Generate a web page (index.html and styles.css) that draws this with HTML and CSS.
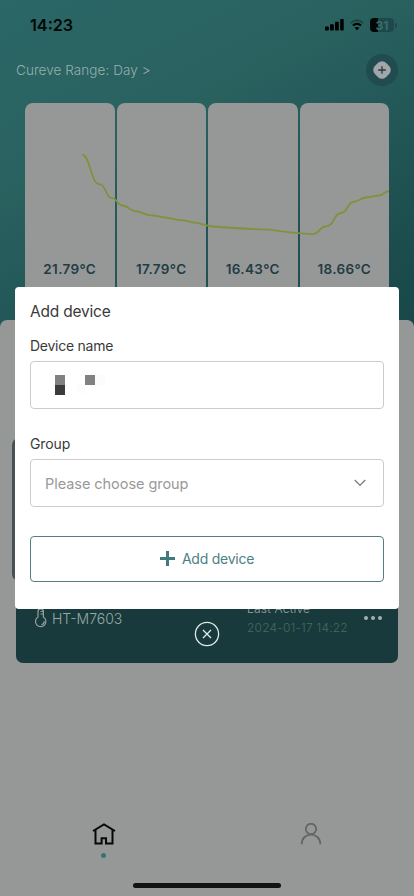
FILE: index.html
```html
<!DOCTYPE html>
<html lang="en">
<head>
<meta charset="utf-8">
<meta name="viewport" content="width=device-width, initial-scale=1">
<title>Add device</title>
<link rel="stylesheet" href="styles.css">
</head>
<body>
<div class="app">
  <header class="hero">
    <div class="status">
      <span class="time">14:23</span>
      <div class="status-icons">
        <svg width="19" height="12" viewBox="0 0 19 12"><rect x="0" y="7.5" width="3.8" height="4" rx=".8"/><rect x="5" y="5.3" width="3.8" height="6.2" rx=".8"/><rect x="10" y="2.8" width="3.8" height="8.7" rx=".8"/><rect x="15.2" y="0" width="3.5" height="11.5" rx=".8"/></svg>
        <svg class="wifi" width="14" height="12" viewBox="0 0 14 12" fill="none"><path d="M.9 4Q7-1.3 13.1 4" stroke="#1d4547" stroke-width="2"/><path d="M2.9 6.5Q7 3.2 11.1 6.5" stroke="#000" stroke-width="2"/><path d="M4.6 8.7Q7 7.1 9.4 8.7L7 11.3Z" fill="#000"/></svg>
        <div class="battery"><span>31</span></div>
        <i class="nub"></i>
      </div>
    </div>
    <div class="toolbar">
      <span class="range">Cureve Range: Day &gt;</span>
      <div class="add-round"><svg width="20" height="20" viewBox="0 0 20 20"><rect x="2.2" y="2.2" width="15.6" height="15.6" rx="5.5" transform="rotate(45 10 10)" fill="#a2a6ab"/><path d="M6.2 10H13.8M10 6.2V13.8" stroke="#263b40" stroke-width="1.3"/></svg></div>
    </div>
    <div class="chart">
      <div class="bar">21.79°C</div>
      <div class="bar">17.79°C</div>
      <div class="bar">16.43°C</div>
      <div class="bar">18.66°C</div>
      <svg class="curve" width="364" height="217" viewBox="25 103 364 217"><path d="M82 154.7C88 154.5 90 171 94 179C96 184.500 98 183.500 101 184.500C105 186 106 195 110 197.500C112 198.300 114 197.600 115.500 200C119 203 118 205.500 124 206C129 206.500 130 210.500 134.500 211C141 211.200 142 214.200 149 215C157 215.200 159 217.200 165 217.500C172 217.800 174 219.800 181 220.200C188 220.500 190 222.300 195 222.600C202 223.800 204 225 209 226C225 228 252 229 270 229.700C280 231.500 293 233.300 312 234.100C320 234.300 319 226.500 326 226.300C335 226 333 213.500 341 213C348 212.500 347 203 353 202C360 201.500 359 198.500 366 197.500C372 197 374 195.800 379 195.500C384 195 384 191.500 389 191"/></svg>
    </div>
  </header>
  <main class="content">
    <div class="side-card"></div>
    <section class="device">
      <div class="device-name">
        <svg width="14" height="20" viewBox="0 0 14 20" fill="none" stroke="#91a2a1" stroke-width="1.2"><path d="M4 9V3.500a2.700 2.700 0 0 1 5.400 0V9a5.200 5.200 0 1 1-5.400 0Z"/><path d="M6.500 3.500H9M6.500 6H9M10.200 13.200A3.400 3.400 0 0 1 7.500 16.700"/></svg>
        <span>HT-M7603</span>
      </div>
      <div class="active"><span class="active-label">Last Active</span><span class="active-date">2024-01-17 14:22</span></div>
      <div class="more"><i></i><i></i><i></i></div>
    </section>
  </main>
  <nav class="tabs">
    <div class="tab"><svg width="24" height="22" viewBox="0 0 24 22" fill="none" stroke="#060707" stroke-width="2"><path d="M1 8L12 1.500L23 8M3.500 7V20.500H9.600V15.300H14V20.500H20.500V7"/></svg><i class="tab-dot"></i></div>
    <div class="tab"><svg width="22" height="22" viewBox="0 0 22 22" fill="none" stroke="#646666" stroke-width="1.800"><circle cx="11" cy="6" r="5.200"/><path d="M1.700 21.300C1.700 8.300 20.300 8.300 20.300 21.300"/></svg></div>
  </nav>
  <div class="home-line"></div>
</div>
<div class="overlay">
  <form class="dialog">
    <h1>Add device</h1>
    <label>Device name</label>
    <div class="field"><svg width="60" height="20" viewBox="0 0 60 20" shape-rendering="crispEdges"><path fill="#818181" d="M10 0h10v10H10zM40 0h10v10H40z"/><path fill="#3b3b3c" d="M10 10h10v10H10z"/><path fill="#fcfcfc" d="M50 0h10v10H50zM32 10h8v8h-8z"/></svg></div>
    <label class="group-label">Group</label>
    <div class="field select"><span>Please choose group</span><svg width="12" height="8" viewBox="0 0 12 8" fill="none" stroke="#777" stroke-width="1.200"><path d="M.8 1L6 6.500L11.200 1"/></svg></div>
    <div class="submit"><svg width="15" height="15" viewBox="0 0 15 15"><path d="M7.500 0V15M0 7.500H15" stroke="#417a7b" stroke-width="3"/></svg><span>Add device</span></div>
  </form>
  <svg class="close" width="26" height="26" viewBox="0 0 26 26" fill="none" stroke="#e2eaea" stroke-width="1.300"><circle cx="13" cy="13" r="11.600"/><path d="M9 9L17 17M17 9L9 17"/></svg>
</div>
</body>
</html>
```
FILE: styles.css
```css
* { box-sizing: border-box; }
body { margin: 0; font-family: Inter, sans-serif; background: #969897; }
svg { display: block; flex: none; }
.app { width: 414px; height: 896px; display: flex; flex-direction: column; overflow: hidden; }
.hero { height: 326px; flex: none; background: linear-gradient(153deg, #2b6767 0%, #29615f 38%, #24595a 55%, #1c4c4e 85%, #19474a 100%); }
.status { height: 50px; padding: 0 17px 0 30px; display: flex; align-items: center; justify-content: space-between; }
.time { font-size: 16.200px; font-weight: 600; line-height: 20px; color: #020707; }
.status-icons { display: flex; align-items: center; gap: 6px; }
.battery { width: 24px; height: 14px; border-radius: 4px; background: linear-gradient(90deg, #020808 0 8px, #1d494b 8px); display: flex; align-items: center; justify-content: center; font-size: 12px; font-weight: 700; color: #3b6b6b; }
.nub { width: 2px; height: 5px; margin-left: -5px; border-radius: 0 2px 2px 0; background: #1d494b; }
.toolbar { height: 40px; padding: 0 16px; display: flex; align-items: center; justify-content: space-between; }
.range { font-size: 13.500px; letter-spacing: .07px; color: #97aead; font-weight: 300; }
.add-round { width: 32px; height: 32px; border-radius: 50%; background: #204b4f; display: flex; align-items: center; justify-content: center; }
.chart { position: relative; margin: 13px 25px 0; height: 217px; display: grid; grid-template-columns: repeat(4, 1fr); gap: 2px; }
.bar { border-radius: 8px 8px 0 0; background: #969897; display: flex; justify-content: center; padding-top: 156px; font-size: 13.500px; line-height: 20px; font-weight: 600; color: #213c45; letter-spacing: .35px; }
.curve { position: absolute; left: 0; top: 0; fill: none; stroke: #7f923c; stroke-width: 1.800; }
.content { height: 480px; flex: none; margin-top: -6px; border-radius: 7px 7px 0 0; background: #969897; padding: 118px 16px 0 12px; }
.side-card { width: 40px; height: 143px; border-radius: 7px; background: #465153; }
.device { height: 74px; margin: 8px 0 0 4px; background: #183a3c; border-radius: 0 0 7px 7px; display: flex; align-items: flex-start; padding: 11px 15px 0 18px; }
.device-name { width: 213px; padding-top: 8px; display: flex; gap: 4px; align-items: center; font-size: 14px; font-weight: 300; letter-spacing: 0; color: #98a8a7; }
.active { display: flex; flex-direction: column; width: 104px; font-size: 12px; letter-spacing: .2px; white-space: nowrap; font-weight: 300; }
.active-label { line-height: 18px; color: #98a8a7; }
.active-date { line-height: 19px; color: #426c5c; }
.more { margin-left: auto; display: flex; gap: 3px; padding-top: 16px; margin-right: 1px; }
.more i { width: 4px; height: 4px; border-radius: 50%; background: #a4afaf; }
.tabs { display: grid; grid-template-columns: 1fr 1fr; height: 82px; padding-top: 23px; }
.tab { display: flex; flex-direction: column; align-items: center; }
.tab-dot { width: 5px; height: 5px; border-radius: 50%; background: #2e7777; margin-top: 8px; }
.home-line { width: 148px; height: 5px; border-radius: 3px; background: #111212; margin: 1px auto 0; }
.overlay { position: absolute; inset: 0; width: 414px; height: 896px; padding: 287px 15px 0; }
.dialog { height: 322px; background: #fff; border-radius: 4px; padding: 14px 15px 0; margin: 0; }
h1 { margin: 0; font-size: 15.500px; line-height: 21px; font-weight: 400; color: #3a3a3a; letter-spacing: -.2px; }
label { display: block; font-size: 14px; line-height: 20px; color: #3a3a3a; margin-top: 14px; letter-spacing: -.25px; }
.field { height: 48px; margin-top: 5px; border: 1px solid #ccc; border-radius: 4px; padding: 0 17px 0 14px; display: flex; align-items: center; }
.group-label { margin-top: 25px; letter-spacing: -.1px; }
.select { justify-content: space-between; font-size: 14.500px; color: #999; letter-spacing: -.05px; }
.submit { height: 46px; margin-top: 28.500px; border: 1px solid #557d83; border-radius: 4px; display: flex; align-items: center; justify-content: center; gap: 7px; font-size: 14px; color: #4b8082; letter-spacing: -.25px; }
.close { margin: 12px auto 0; }
```
